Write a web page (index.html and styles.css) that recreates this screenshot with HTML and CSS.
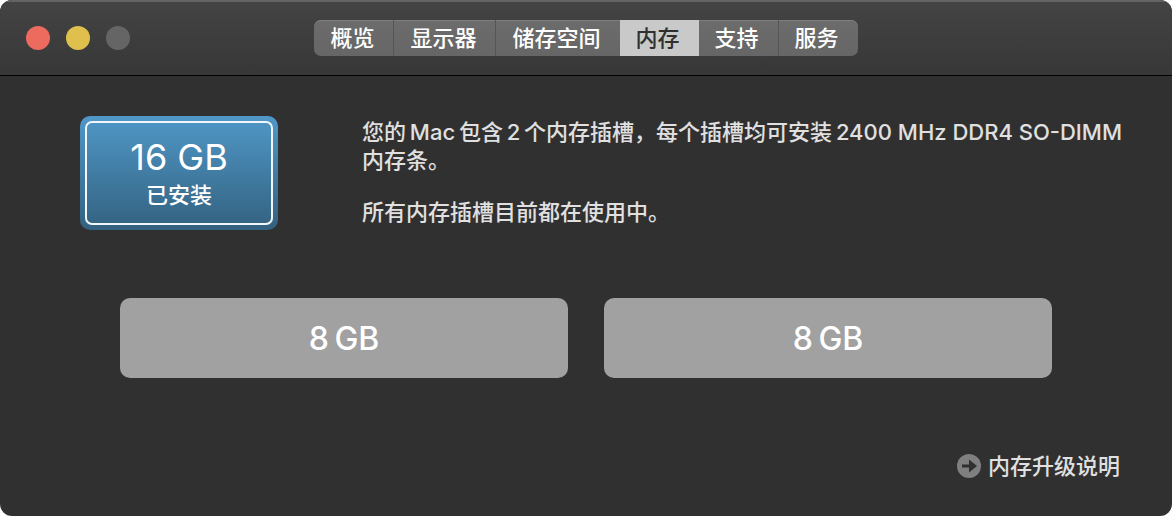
FILE: index.html
```html
<!DOCTYPE html>
<html lang="zh-Hans">
<head>
  <meta charset="UTF-8" />
  <title>关于本机</title>
  <meta name="viewport" content="width=device-width, initial-scale=1.0" />
  <link rel="stylesheet" href="styles.css">
</head>
<body>
  <div class="window">
    <header class="titlebar">
      <div class="lights">
        <button class="light close" aria-label="关闭"></button>
        <button class="light minimize" aria-label="最小化"></button>
        <button class="light zoom" aria-label="缩放" disabled></button>
      </div>
      <nav class="tabs">
        <button class="tab">概览</button>
        <button class="tab">显示器</button>
        <button class="tab">储存空间</button>
        <button class="tab active" aria-current="page">内存</button>
        <button class="tab">支持</button>
        <button class="tab">服务</button>
      </nav>
    </header>

    <main class="content">
      <section class="summary">
        <div class="badge">
          <div class="badge-inner">
            <span class="badge-size">16 GB</span>
            <span class="badge-label">已安装</span>
          </div>
        </div>
        <div class="description">
          <p>您的&thinsp;Mac&thinsp;包含&thinsp;2&thinsp;个内存插槽，每个插槽均可安装&thinsp;2400 MHz DDR4 SO-DIMM 内存条。</p>
          <p>所有内存插槽目前都在使用中。</p>
        </div>
      </section>

      <section class="slots">
        <div class="slot">8&thinsp;GB</div>
        <div class="slot">8&thinsp;GB</div>
      </section>

      <footer class="footer">
        <a class="help-link" href="#">
          <svg class="help-icon" viewBox="0 0 24 24" aria-hidden="true">
            <circle cx="12" cy="12" r="12" fill="#7f7f7f" />
            <path d="M5 10.500h7V5.500L20 12 12 18.500v-5H5z" fill="#303030" />
          </svg>
          <span>内存升级说明</span>
        </a>
      </footer>
    </main>
  </div>
</body>
</html>
```
FILE: styles.css
```css
* {
  box-sizing: border-box;
}

body {
  margin: 0;
  background: #fff;
  color: #e0e0e0;
  font-family: Inter, "Noto Sans CJK SC", sans-serif;
  font-size: 22px;
  font-weight: 500;
  line-height: 28px;
}

button {
  margin: 0;
  padding: 0;
  border: none;
  font: inherit;
  color: inherit;
}

p {
  margin: 0;
}

.window {
  display: flex;
  flex-direction: column;
  min-height: 100vh;
  background: #303030;
  border-radius: 12px;
  overflow: hidden;
}

/* title bar */
.titlebar {
  display: grid;
  grid-template-columns: 1fr auto 1fr;
  align-items: center;
  height: 76px;
  padding: 0 26px;
  background: linear-gradient(#444, #373737);
  border-bottom: 1px solid #000;
  box-shadow: inset 0 2px 0 #636363;
}

.lights {
  display: flex;
  gap: 16px;
}

.light {
  width: 24px;
  height: 24px;
  border-radius: 50%;
}

.close {
  background: #ed6a5e;
}

.minimize {
  background: #e0c04c;
}

.zoom {
  background: #656565;
}

.tabs {
  display: flex;
  height: 36px;
  border-radius: 7px;
  background: linear-gradient(#6c6c6c, #666);
  box-shadow: inset 0 1px 0 #7e7e7e;
  overflow: hidden;
}

.tab {
  padding: 0 19px 0 16px;
  background: none;
  border-right: 1px solid #555;
  color: #fff;
}

.tab.active {
  background: #c9c9c9;
  color: #303030;
}

.tab.active,
.tab:has(+ .active),
.tab:last-child {
  border-right: none;
}

/* content */
.content {
  flex: 1;
  display: flex;
  flex-direction: column;
  padding: 40px 40px 36px 80px;
}

.summary {
  display: flex;
  gap: 84px;
}

.badge {
  flex: none;
  width: 198px;
  height: 114px;
  padding: 5px;
  border-radius: 10px;
  background: linear-gradient(#5098c8, #33617f);
  color: #fff;
}

.badge-inner {
  display: flex;
  flex-direction: column;
  align-items: center;
  justify-content: center;
  height: 100%;
  border: 2px solid #f2f6f9;
  border-radius: 7px;
}

.badge-size {
  font-size: 36px;
  font-weight: 400;
  line-height: 44px;
}

.badge-label {
  line-height: 32px;
}

.description {
  display: flex;
  flex-direction: column;
  gap: 24px;
  padding-top: 2px;
}

.slots {
  display: grid;
  grid-template-columns: 1fr 1fr;
  gap: 36px;
  margin: 68px 80px 0 40px;
}

.slot {
  display: flex;
  align-items: center;
  justify-content: center;
  height: 80px;
  padding-top: 2px;
  border-radius: 10px;
  background: #a1a1a1;
  color: #fff;
  font-size: 32px;
}

.footer {
  display: flex;
  justify-content: flex-end;
  margin-top: auto;
  padding-right: 12px;
}

.help-link {
  display: flex;
  align-items: center;
  gap: 7px;
  color: inherit;
  text-decoration: none;
}

.help-icon {
  width: 24px;
  height: 24px;
}
```
